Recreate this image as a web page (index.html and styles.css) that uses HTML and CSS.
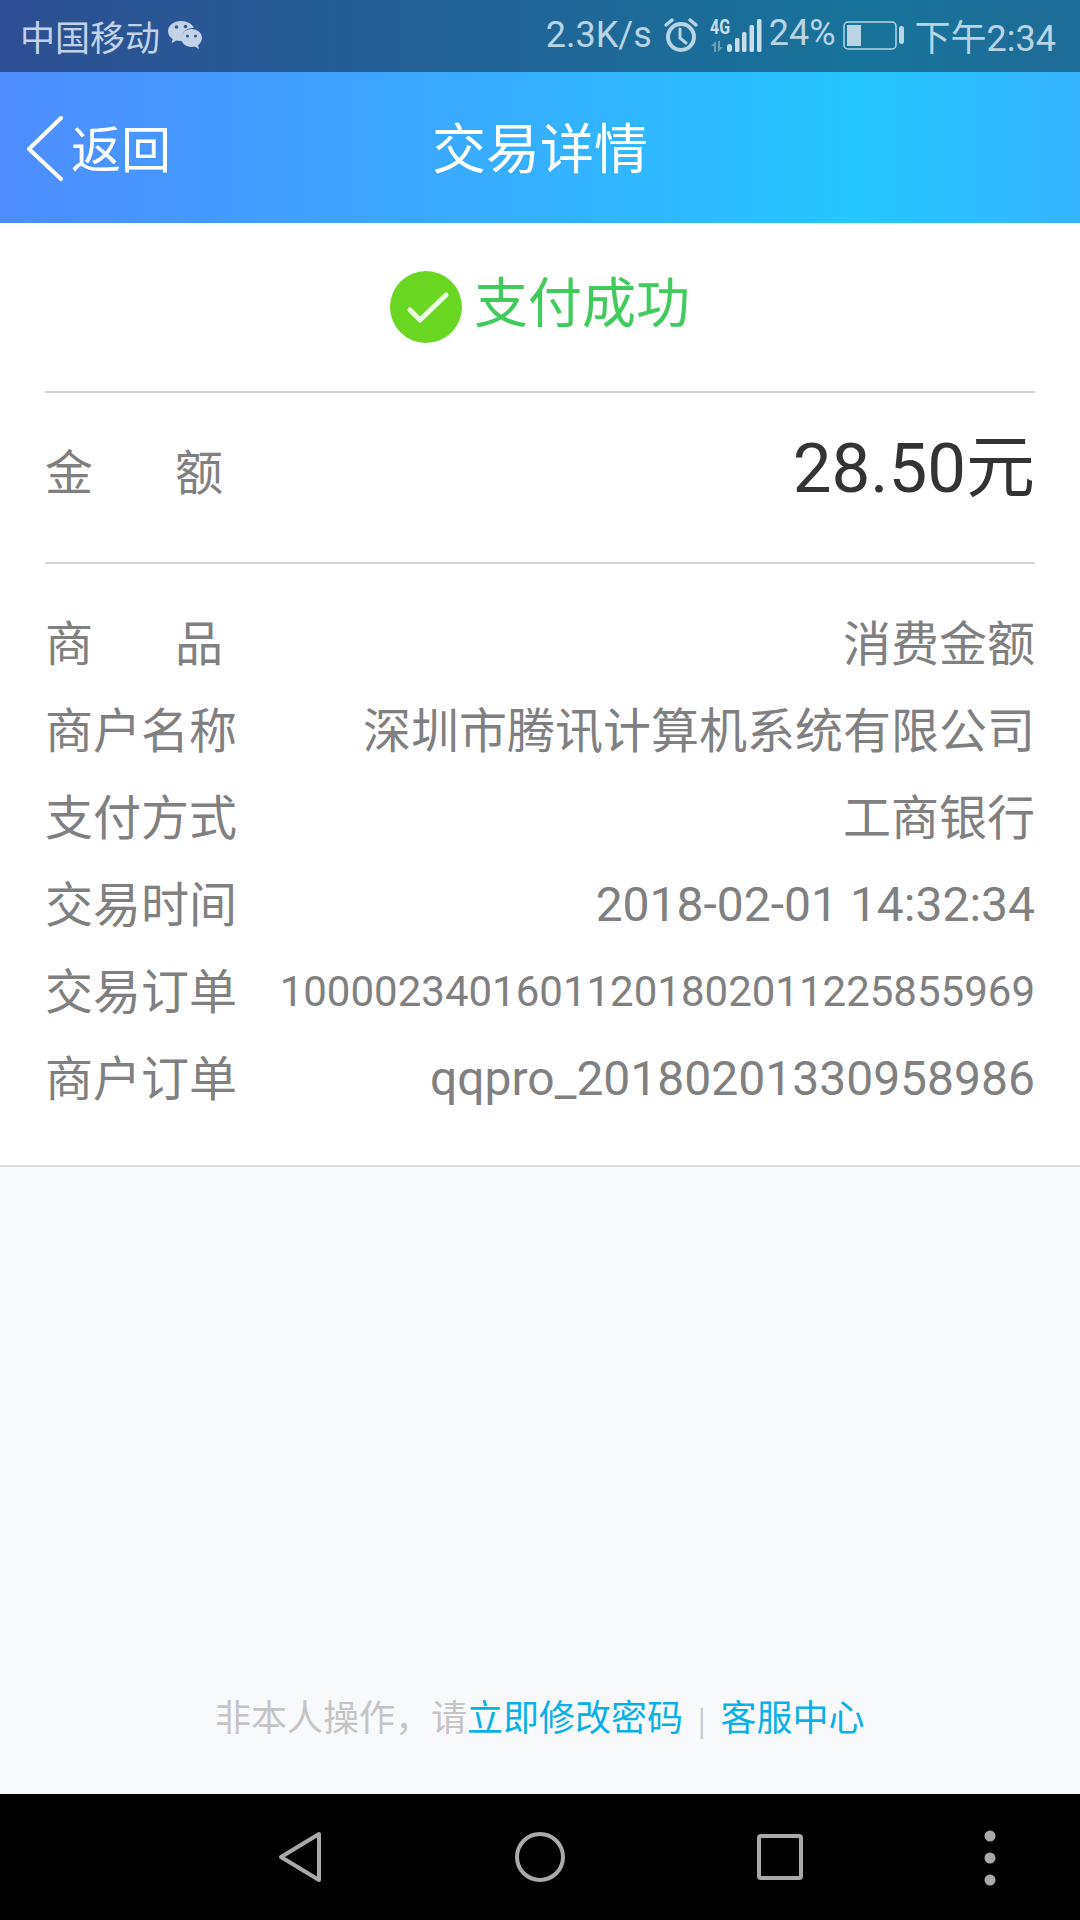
FILE: index.html
```html
<!DOCTYPE html>
<html lang="zh-CN">
<head>
    <meta charset="UTF-8">
    <title>交易详情</title>
    <link rel="stylesheet" href="styles.css">
</head>
<body>
    <div class="screen">
        <div class="status-bar">
            <div class="status-left">
                <span>中国移动</span>
                <svg class="wechat" width="36" height="30" viewBox="0 0 36 30">
                    <path d="M14 1C6.8 1 1 5.6 1 11.200c0 3.200 1.900 6 4.800 7.900L4.500 23l5-2.500c1.300.3 2.800.5 4.200.5.500 0 1 0 1.500-.1-.4-1.200-.6-2.300-.6-3.400C14.600 12 19.700 8 26 8c.4 0 .6 0 .9.100C25.400 4 20.200 1 14 1z" fill="#c3d2e6"/>
                    <path d="M35 18c0-5.200-5-9-10.500-9S14 12.800 14 18s5 9 10.500 9c1.200 0 2.300-.2 3.300-.5L32 29l-1-3.700c2.400-1.700 4-4.400 4-7.300z" fill="#c3d2e6"/>
                    <circle cx="9.500" cy="7" r="1.800" fill="#2a5c96"/>
                    <circle cx="18.500" cy="6.500" r="1.800" fill="#2a5c96"/>
                    <circle cx="20.500" cy="16" r="1.500" fill="#2a5c96"/>
                    <circle cx="28.500" cy="16" r="1.500" fill="#2a5c96"/>
                </svg>
            </div>
            <div class="status-right">
                <span class="speed">2.3K/s</span>
                <svg class="alarm" width="34" height="36" viewBox="0 0 34 36" fill="none" stroke="#b9d5e3" stroke-linecap="round">
                    <circle cx="17" cy="20" r="13" stroke-width="4"/>
                    <path d="M16 12v9l6 5" stroke-width="3"/>
                    <path d="M2 8l6-5M32 8l-6-5" stroke-width="3.500"/>
                </svg>
                <span class="signal">
                    <span class="net-type">4G</span>
                    <svg width="54" height="36" viewBox="0 0 54 36">
                        <path d="M7 24v11H5v-6H2zM9 24h2v6h3l-5 5z" fill="#6f9fb5"/>
                        <rect x="18" y="27" width="5" height="8" rx="2.500" fill="#c9dde8"/>
                        <rect x="26" y="21" width="4.500" height="14" rx="1.500" fill="#c9dde8"/>
                        <rect x="33" y="15" width="4.500" height="20" rx="1.500" fill="#c9dde8"/>
                        <rect x="40.500" y="8" width="4.500" height="27" rx="1.500" fill="#c9dde8"/>
                        <rect x="48" y="2" width="4.500" height="33" rx="1.500" fill="#c9dde8"/>
                    </svg>
                </span>
                <span class="battery-pct">24%</span>
                <svg class="battery" width="61" height="30" viewBox="0 0 61 30">
                    <rect x="1" y="2" width="52" height="27" rx="4" fill="none" stroke="#b9d5e3" stroke-width="1.500"/>
                    <rect x="4" y="5" width="14" height="21" fill="#b9d5e3"/>
                    <rect x="56" y="6" width="5" height="18" rx="2.500" fill="#b9d5e3"/>
                </svg>
                <span class="clock">下午2:34</span>
            </div>
        </div>
        <div class="nav-bar">
            <div class="back">
                <svg width="38" height="66" viewBox="0 0 38 66" fill="none" stroke="#fff" stroke-width="4" stroke-linecap="round" stroke-linejoin="round">
                    <path d="M35 3L3 34l32 30"/>
                </svg>
                <span>返回</span>
            </div>
            <div class="nav-title">交易详情</div>
        </div>
        <div class="main">
            <div class="card">
                <div class="result">
                    <svg class="result-icon" width="72" height="72" viewBox="0 0 72 72">
                        <circle cx="36" cy="36" r="36" fill="#69d622"/>
                        <path d="M20 39l10 10 26-25" fill="none" stroke="#eefae6" stroke-width="5" stroke-linecap="round" stroke-linejoin="round"/>
                    </svg>
                    <span class="result-text">支付成功</span>
                </div>
                <div class="amount-row">
                    <span class="label spread"><i>金</i><i>额</i></span>
                    <span class="amount">28.50元</span>
                </div>
                <div class="details">
                    <div class="row"><span class="label spread"><i>商</i><i>品</i></span><span class="value">消费金额</span></div>
                    <div class="row"><span class="label">商户名称</span><span class="value">深圳市腾讯计算机系统有限公司</span></div>
                    <div class="row"><span class="label">支付方式</span><span class="value">工商银行</span></div>
                    <div class="row"><span class="label">交易时间</span><span class="value num">2018-02-01 14:32:34</span></div>
                    <div class="row"><span class="label">交易订单</span><span class="value num small">10000234016011201802011225855969</span></div>
                    <div class="row"><span class="label">商户订单</span><span class="value num">qqpro_20180201330958986</span></div>
                </div>
            </div>
            <div class="footer">
                <span class="muted">非本人操作，请</span><span class="link">立即修改密码</span><span class="sep">|</span><span class="link">客服中心</span>
            </div>
        </div>
        <div class="soft-keys">
            <svg class="key-back" width="44" height="52" viewBox="0 0 44 52" fill="none" stroke="#a9a9a9" stroke-width="4" stroke-linejoin="round"><path d="M41 3v46L3 26z"/></svg>
            <svg class="key-home" width="50" height="50" viewBox="0 0 50 50" fill="none" stroke="#a9a9a9" stroke-width="4"><circle cx="25" cy="25" r="23"/></svg>
            <svg class="key-recent" width="46" height="46" viewBox="0 0 46 46" fill="none" stroke="#a9a9a9" stroke-width="4" stroke-linejoin="round"><rect x="2" y="2" width="42" height="42" rx="2"/></svg>
            <svg class="key-more" width="12" height="56" viewBox="0 0 12 56" fill="#a9a9a9"><circle cx="6" cy="6" r="5.500"/><circle cx="6" cy="28" r="5.500"/><circle cx="6" cy="50" r="5.500"/></svg>
        </div>
    </div>
</body>
</html>
```

FILE: styles.css
```css
* {
    box-sizing: border-box;
}

body {
    margin: 0;
    font-family: "Noto Sans CJK SC", Roboto, sans-serif;
}

.screen {
    width: 1080px;
    height: 1920px;
    display: flex;
    flex-direction: column;
    background: #f8f9fb;
    overflow: hidden;
}

.status-bar {
    height: 72px;
    padding: 0 24px 2px 20px;
    display: flex;
    align-items: center;
    justify-content: space-between;
    background: linear-gradient(90deg, #2d4f93 0%, #17739a 80%, #1f6c98 100%);
    font-family: Roboto, "Noto Sans CJK SC", sans-serif;
    font-size: 36px;
    color: #b9d5e3;
}

.status-left {
    display: flex;
    align-items: center;
    gap: 7px;
    font-size: 35px;
    color: #c3d2e6;
}

.status-right {
    display: flex;
    align-items: center;
}

.speed {
    margin-right: 12px;
}

.signal {
    position: relative;
    width: 54px;
    height: 36px;
    margin-left: 11px;
}

.net-type {
    position: absolute;
    left: 1px;
    top: 3px;
    font-size: 20px;
    line-height: 15px;
    font-weight: 700;
    color: #c9dde8;
    transform: scaleX(.8);
    transform-origin: left;
}

.signal svg {
    position: absolute;
    left: 0;
    top: 0;
}

.battery-pct {
    margin: 0 7px 4px 6px;
}

.battery {
    margin-right: 11px;
}

.nav-bar {
    position: relative;
    height: 151px;
    display: flex;
    align-items: center;
    justify-content: center;
    background: linear-gradient(90deg, #4f8cff 0%, #25c6ff 80%, #36b4ff 100%);
    color: #fff;
}

.back {
    position: absolute;
    left: 26px;
    top: 42px;
    display: flex;
    align-items: center;
    gap: 7px;
    font-size: 50px;
}

.back span {
    margin-top: -4px;
}

.nav-title {
    font-size: 54px;
    margin-bottom: 4px;
}

.main {
    flex: 1;
    display: flex;
    flex-direction: column;
    justify-content: space-between;
}

.card {
    background: #fff;
    border-bottom: 2px solid #dcdcdc;
    padding: 0 45px;
    height: 944px;
}

.result {
    height: 170px;
    display: flex;
    align-items: center;
    justify-content: center;
    gap: 12px;
    padding-bottom: 2px;
    border-bottom: 2px solid #d4d4d4;
    font-size: 54px;
    color: #41cb5c;
}

.result-icon {
    margin-top: 2px;
}

.result-text {
    margin-bottom: 14px;
}

.amount-row {
    height: 171px;
    display: flex;
    align-items: center;
    justify-content: space-between;
    padding-bottom: 18px;
    border-bottom: 2px solid #d4d4d4;
}

.amount {
    font-family: Roboto, "Noto Sans CJK SC", sans-serif;
    font-size: 69px;
    line-height: 90px;
    color: #333;
}

.details {
    padding-top: 32px;
}

.row {
    height: 87px;
    display: flex;
    align-items: center;
    justify-content: space-between;
}

.label {
    width: 190px;
    font-size: 48px;
    color: #808080;
    white-space: nowrap;
}

.spread {
    display: flex;
    justify-content: space-between;
    width: 178px;
}

.spread i {
    font-style: normal;
}

.value {
    font-family: Roboto, "Noto Sans CJK SC", sans-serif;
    font-size: 48px;
    color: #808080;
    white-space: nowrap;
}

.value.num {
    margin-top: 7px;
}

.value.small {
    font-size: 42px;
}

.footer {
    height: 151px;
    padding-left: 215px;
    font-size: 36px;
    line-height: 50px;
    padding-top: 47px;
}

.muted {
    color: #c4c4c4;
}

.link {
    color: #0ab0e6;
}

.sep {
    margin: 0 15px;
    color: #c4c4c4;
    font-size: 28px;
}

.soft-keys {
    position: relative;
    height: 126px;
    flex-shrink: 0;
    background: #000;
}

.soft-keys svg {
    position: absolute;
}

.key-back {
    left: 278px;
    top: 37px;
}

.key-home {
    left: 515px;
    top: 38px;
}

.key-recent {
    left: 757px;
    top: 40px;
}

.key-more {
    left: 984px;
    top: 36px;
}
```
